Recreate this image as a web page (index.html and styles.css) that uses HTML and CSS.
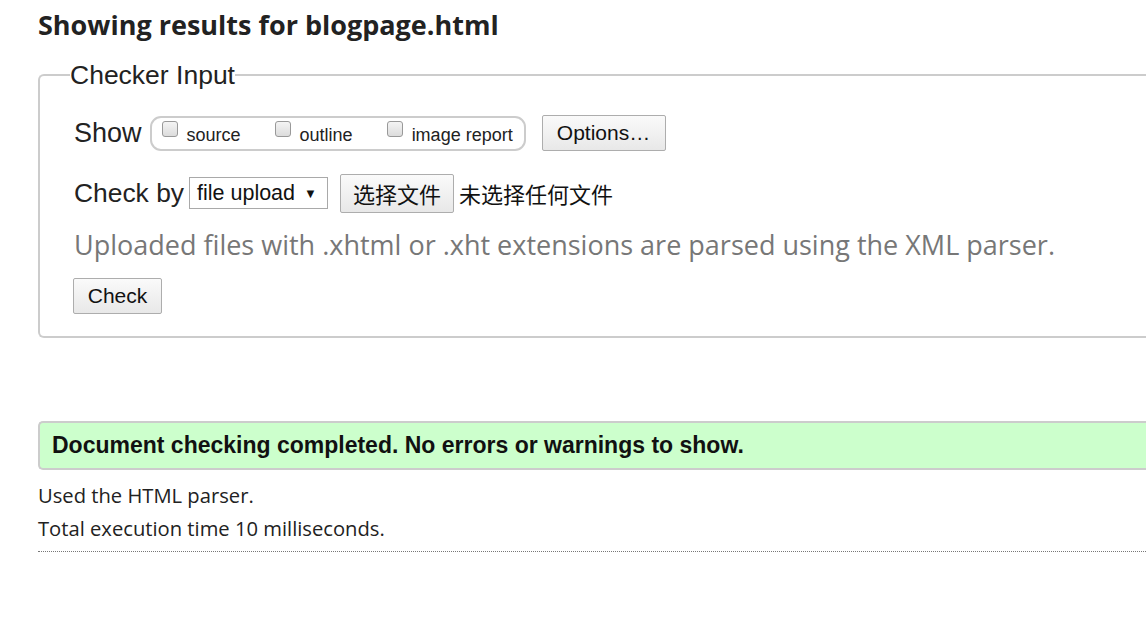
FILE: index.html
```html
<!DOCTYPE html>
<html>
<head>
<meta charset="utf-8">
<link rel="stylesheet" href="styles.css">
</head>
<body>
<div class="page">
  <h2 class="title">Showing results for blogpage.html</h2>
  <fieldset class="checker">
    <legend>Checker Input</legend>
    <div class="row show-row">
      <span class="label">Show</span>
      <span class="group">
        <label class="opt"><input type="checkbox"> source</label>
        <label class="opt"><input type="checkbox"> outline</label>
        <label class="opt"><input type="checkbox"> image report</label>
      </span>
      <button class="btn options">Options…</button>
    </div>
    <div class="row by-row">
      <span class="label">Check by</span>
      <span class="select">file upload <span class="arrow">▼</span></span>
      <button class="btn file">选择文件</button>
      <span class="nofile">未选择任何文件</span>
    </div>
    <p class="hint">Uploaded files with .xhtml or .xht extensions are parsed using the XML parser.</p>
    <div class="row"><button class="btn check">Check</button></div>
  </fieldset>
  <div class="success">Document checking completed. No errors or warnings to show.</div>
  <p class="info first">Used the HTML parser.</p>
  <p class="info">Total execution time 10 milliseconds.</p>
  <hr class="dots">
</div>
</body>
</html>
```
FILE: styles.css
```css
html, body { margin: 0; padding: 0; background: #fff; overflow: hidden; }
body { font-family: "Open Sans", "Noto Sans", sans-serif; color: #222; }
.page { padding-left: 38px; width: 1200px; }
.title { margin: 0; padding-top: 8px; font-size: 27px; font-weight: 700; color: #222; line-height: 34px; }
.checker {
  margin: 18px 0 0 0; padding: 8px 34px 22px 34px;
  border: 2px solid #ccc; border-radius: 6px; border-right: none;
  border-top-right-radius: 0; border-bottom-right-radius: 0;
}
.checker legend { font-family: "Liberation Sans", Arial, sans-serif; font-size: 26.5px; color: #222; padding: 0; margin-left: -4px; line-height: 30px; }
.row { display: flex; align-items: center; }
.label { font-family: "Liberation Sans", Arial, sans-serif; font-size: 27px; color: #222; }
.by-row .label { font-size: 26.4px; }
.show-row { margin-top: 16px; height: 38px; }
.group {
  display: flex; align-items: center; margin-left: 8px; height: 35px; width: 376px; box-sizing: border-box;
  border: 2px solid #ccc; border-radius: 11px; padding: 0 10px;
}
.opt { font-family: "Liberation Sans", Arial, sans-serif; font-size: 18px; color: #222; display: flex; align-items: center; margin-right: 34px; position: relative; top: 2px; }
.opt:last-child { margin-right: 0; }
.opt input {
  appearance: none; width: 16px; height: 16px; margin: 0 9px 0 0; border: 1px solid #999; border-radius: 3px;
  background: linear-gradient(#f4f4f4, #dcdcdc); position: relative; top: -6px;
}
.btn {
  font-family: "Liberation Sans", Arial, sans-serif; color: #111; background: linear-gradient(#fafafa, #e8e8e8);
  border: 1px solid #adadad; border-radius: 2px; padding: 0; cursor: default;
}
.options { font-size: 21px; width: 124px; height: 36px; margin-left: 16px; }
.by-row { margin-top: 21px; height: 40px; }
.select {
  font-family: "Liberation Sans", Arial, sans-serif; font-size: 21.5px; color: #111;
  margin-left: 5px; width: 139px; height: 32px; box-sizing: border-box; border: 1px solid #a9a9a9;
  display: flex; align-items: center; padding-left: 7px;
}
.arrow { font-size: 13px; margin-left: 9px; }
.file { font-family: "Noto Sans CJK SC", sans-serif; font-size: 22px; width: 114px; height: 39px; margin-left: 12px; }
.nofile { font-family: "Noto Sans CJK SC", sans-serif; font-size: 22px; color: #111; margin-left: 5px; }
.hint { margin: 12px 0 0 0; font-size: 27px; color: #777; line-height: 40px; }
.check { font-size: 21px; width: 89px; height: 36px; margin-top: 13px; margin-left: -1px; }
.success {
  margin-top: 83px; height: 49px; box-sizing: border-box; border: 2px solid #ccc; border-right: none;
  border-radius: 5px 0 0 5px; background: #ccffcc; padding-left: 12px;
  font-family: "Liberation Sans", Arial, sans-serif; font-weight: 700; font-size: 23px; color: #111;
  display: flex; align-items: center;
}
.info { margin: 0; font-size: 20.2px; color: #222; line-height: 33px; }
.info.first { margin-top: 9px; }
.dots { margin: 6px 0 0 0; border: none; border-top: 1px dotted #777; height: 0; }
```
